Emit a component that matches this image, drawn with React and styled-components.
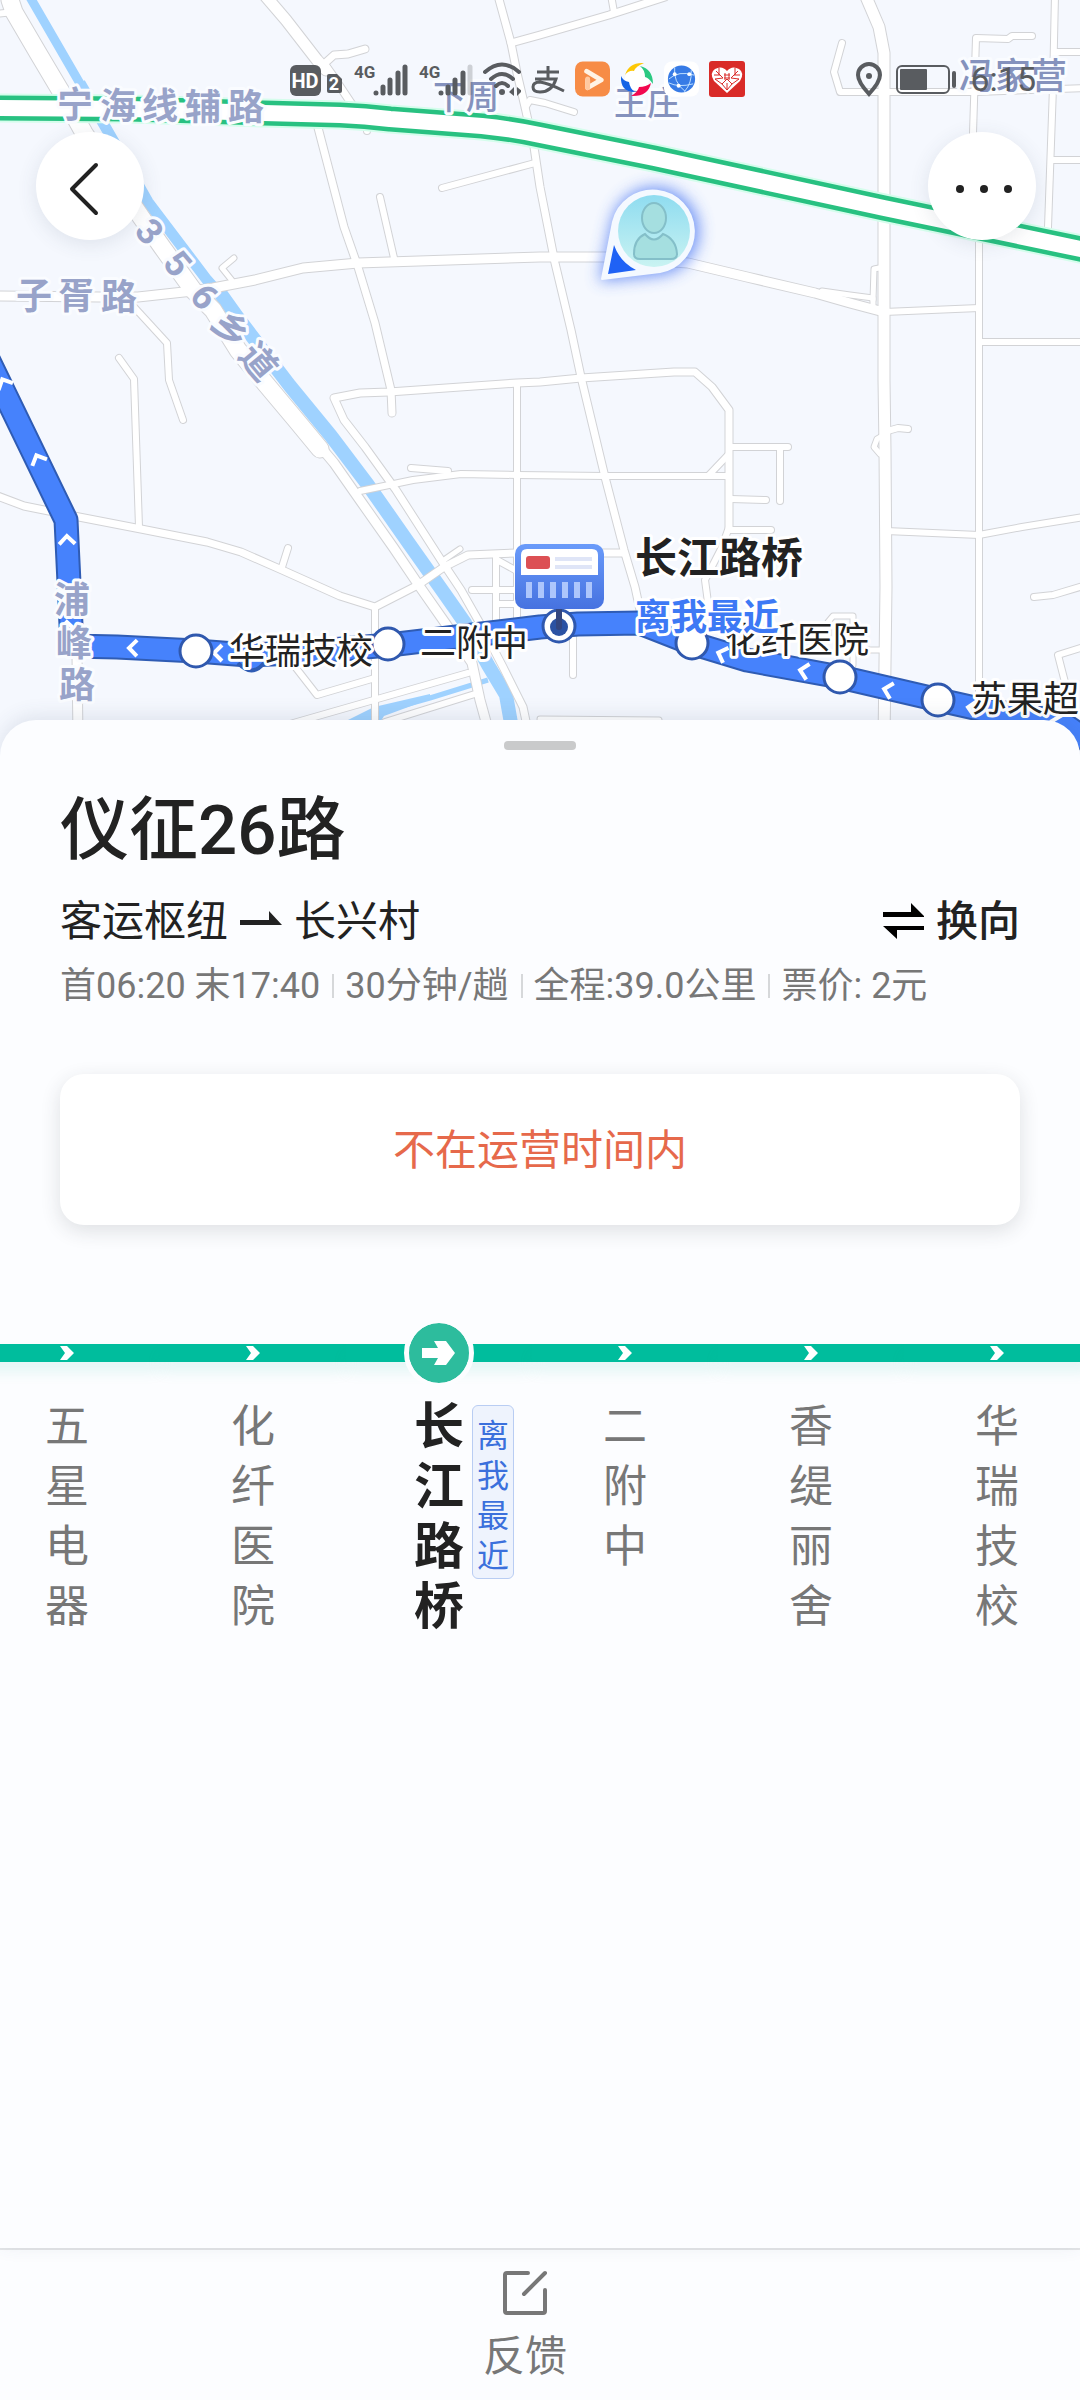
import styled, { createGlobalStyle } from "styled-components"

const roads = [
    { w: 17, d: "M10 0L14 12L38 53L60 90L84 133L141 217L162 247L193 290L213 310L238 350L265 383L296 420L320 449" },
    { w: 9, d: "M318 444L334 463L362 503L393 547L420 587L448 627L472 663L480 700L491 740" },
    { w: 6, d: "M-5 14L14 12" },
    { w: 9, d: "M-5 296L100 297L138 297L193 291L213 288L255 280L303 268L358 263L540 257L605 257L688 263L747 277L815 293L850 303L884 312" },
    { w: 6, d: "M884 312L979 308" },
    { w: 11, d: "M262 -8L286 20L317 60L326 70" },
    { w: 7, d: "M326 66L331 73L353 106" },
    { w: 7, d: "M324 64L334 55L348 54L365 49" },
    { w: 6, d: "M367 120L367 131" },
    { w: 7, d: "M316 120L344 227L358 267L375 323L391 390L392 413" },
    { w: 6, d: "M380 197L394 258" },
    { w: 6, d: "M442 188L535 163" },
    { w: 7, d: "M497 -8L511 43L517 73L525 107L534 147L540 187L555 263L571 330L581 377L605 477L624 550L635 587L640 610" },
    { w: 7, d: "M511 43L540 35L609 15L665 -3" },
    { w: 6, d: "M611 -5L614 12" },
    { w: 6, d: "M525 108L530 100L545 103L574 112" },
    { w: 11, d: "M864 -8L879 27L884 53L884 380L885 450L886 587L884 740" },
    { w: 6, d: "M842 43L834 72L840 92L884 92L976 92L1090 88" },
    { w: 6, d: "M1032 36L1012 36L1008 39L976 38L973 133L979 240L979 683L979 700" },
    { w: 6, d: "M1055 -5L1053 87L1048 227L1048 240" },
    { w: 6, d: "M1055 52L1090 52" },
    { w: 6, d: "M1051 160L1090 160" },
    { w: 6, d: "M979 342L1090 342" },
    { w: 5, d: "M884 267L874 269L873 300" },
    { w: 5, d: "M822 291L850 295L873 298L873 306" },
    { w: 6, d: "M119 358L134 379L139 527" },
    { w: 6, d: "M134 307L167 343L169 380L183 420" },
    { w: 7, d: "M-5 495L24 506L79 517L141 529L207 542L241 552L282 570L340 596L375 607L418 585L444 567L468 555L517 553L624 553" },
    { w: 6, d: "M288 548L282 567" },
    { w: 7, d: "M729 527L729 410L712 387L695 372L674 372L581 378L540 382L517 383L389 392L360 393L334 398L344 420L365 447L396 490L441 560L461 590L482 627L503 667L523 707L530 740" },
    { w: 6, d: "M729 527L722 547L705 580L709 610" },
    { w: 6, d: "M360 491L413 480L461 474L517 475L605 476L729 476" },
    { w: 6, d: "M411 468L448 471" },
    { w: 6, d: "M517 383L517 620" },
    { w: 6, d: "M496 555L496 620M472 590L517 590M496 604L517 604M497 560L517 571" },
    { w: 6, d: "M375 607L375 740" },
    { w: 6, d: "M296 668L317 695L375 678" },
    { w: 6, d: "M290 724L468 673" },
    { w: 6, d: "M385 722L478 693" },
    { w: 5, d: "M444 560L460 549" },
    { w: 5, d: "M234 283L222 268L234 258" },
    { w: 9, d: "M77 655L78 740" },
    { w: 6, d: "M729 447L788 447M780 447L780 501M731 499L766 500M729 530L771 530M709 475L728 455" },
    { w: 6, d: "M573 633L573 675" },
    { w: 6, d: "M884 432L898 428L908 429" },
    { w: 5, d: "M884 435L877 439L874 447L880 454" },
    { w: 6, d: "M886 531L979 535L1022 527L1090 516" },
    { w: 6, d: "M1034 597L1053 595L1090 584" },
    { w: 6, d: "M1090 645L1058 655L1067 690" },
    { w: 5, d: "M828 640L828 622L833 616L853 616L853 665" },
    { w: 5, d: "M866 650L884 650" },
    { w: 5, d: "M540 719L659 720" },
]

const busLine = "M-30 322L66 520L72 646L117 647L196 651L248 655L296 653L389 645L540 627L578 624L640 623L691 643L747 660L840 677L939 700L988 711L1030 716L1062 723L1110 756"
const highway = "M-10 108L130 109L264 113L340 115Q365 116 390 119L482 126Q512 129 540 135L654 158L884 208L1095 252"
const stops = [[196, 651], [388, 644], [692, 643], [840, 677], [938, 700]]
const chevrons = [[4, 383, 64], [38, 459, 66], [67, 540, 88], [133, 648, 1], [218, 653, 0], [67, 626, 88], [722, 654, 20], [804, 671, 12], [888, 690, 14], [972, 708, 10], [1056, 722, 14]]

const roadNames = [
    { text: "宁海线辅路", x: "57 100 142 185 228", y: "118 119 119 120 120" },
    { text: "子胥路", x: "16 58 101", y: "309 309 310" },
    { text: "浦峰路", x: "54 56 59", y: "613 656 698" },
]
const slopedName = [["3", 149, 232], ["5", 177, 264], ["6", 204, 297], ["乡", 230, 330], ["道", 258, 362]]

const stations = [
    { name: "五星电器" },
    { name: "化纤医院" },
    { name: "长江路桥", current: true, tag: "离我最近" },
    { name: "二附中" },
    { name: "香缇丽舍" },
    { name: "华瑞技校" },
]

function CityMap() {
    return (
        <MapSvg viewBox="0 0 1080 760" preserveAspectRatio="xMidYMin slice" aria-hidden="true">
            <defs>
                <linearGradient id="face" x1="0" y1="0" x2="0" y2="1">
                    <stop offset="0" stopColor="#8fdcf0" />
                    <stop offset="1" stopColor="#c9f3f2" />
                </linearGradient>
                <linearGradient id="board" x1="0" y1="0" x2="0" y2="1">
                    <stop offset="0" stopColor="#6a9bfa" />
                    <stop offset="1" stopColor="#4672e0" />
                </linearGradient>
                <filter id="glow" x="-50%" y="-50%" width="200%" height="200%">
                    <feGaussianBlur stdDeviation="8" />
                </filter>
            </defs>
            <rect width="1080" height="760" fill="#f5f8fe" />

            {/* river */}
            <g fill="none" stroke="#9fd2ff" strokeLinejoin="round">
                <path strokeWidth="9" d="M27 -8L82 87L100 120" />
                <path strokeWidth="11" d="M80 83L114 142L148 202L207 280L225 300" />
                <path strokeWidth="14" d="M218 290L238 318L290 386L331 436L368 485L410 545L444 593L465 623L488 665L506 695L514 740" />
                <path strokeWidth="5" d="M488 680L430 698L380 712" />
            </g>
            <path fill="#9fd2ff" d="M340 724L374 707L430 694L430 699L384 716L378 726Z" />

            {/* roads */}
            <g fill="none" strokeLinejoin="round" strokeLinecap="round">
                {roads.map((road, i) => <path key={i} d={road.d} stroke="#d2d3d6" strokeWidth={road.w + 2} />)}
                {roads.map((road, i) => <path key={i} d={road.d} stroke="#ffffff" strokeWidth={road.w} />)}
            </g>
            <g fill="none" strokeLinejoin="round">
                <path d={highway} stroke="#d5fdec" strokeWidth="29" />
                <path d={highway} stroke="#28c181" strokeWidth="25" />
                <path d={highway} stroke="#ffffff" strokeWidth="16" />
            </g>

            {/* bus route */}
            <g fill="none" strokeLinejoin="round">
                <path d={busLine} stroke="#2f5cb4" strokeWidth="25" />
                <path d={busLine} stroke="#4682fc" strokeWidth="21" />
                {chevrons.map(([x, y, r]) => (
                    <path key={x + "-" + y} transform={`translate(${x} ${y}) rotate(${r})`} d="M4 -8L-4 0L4 8" stroke="#fff" strokeWidth="4" strokeLinejoin="miter" />
                ))}
                <path d="M238 663Q252 678 264 663" stroke="#2f5cb4" strokeWidth="4" fill="#4682fc" />
                {stops.map(([x, y]) => <circle key={x} cx={x} cy={y} r="16" fill="#fff" stroke="#2f58ae" strokeWidth="3" />)}
            </g>

            <g fill="#98a3c9" fontSize="36" fontWeight="700" stroke="#fafcff" strokeWidth="6" strokeLinejoin="round" paintOrder="stroke">
                {roadNames.map((road) => <text key={road.text} x={road.x} y={road.y}>{road.text}</text>)}
                {slopedName.map(([char, x, y]) => (
                    <text key={char} transform={`translate(${x} ${y}) rotate(50)`} y="12" textAnchor="middle">{char}</text>
                ))}
                <g fill="#8592bd" fontWeight="500">
                    <text x="433" y="109" fontSize="33">下周</text>
                    <text x="614" y="115" fontSize="33">王庄</text>
                    <text x="959" y="89">冯家营</text>
                </g>
            </g>
            <g fill="#222" fontSize="36" stroke="#fff" strokeWidth="6" strokeLinejoin="round" paintOrder="stroke">
                <text x="229" y="664">华瑞技校</text>
                <text x="420" y="656">二附中</text>
                <text x="725" y="653">化纤医院</text>
                <text x="971" y="712">苏果超</text>
                <text x="635" y="573" fontSize="42" fontWeight="700">长江路桥</text>
                <text x="635" y="630" fontWeight="700" fill="#3d79f5">离我最近</text>
            </g>

            {/* stop board */}
            <circle cx="559" cy="626" r="16" fill="#fff" stroke="#2f58ae" strokeWidth="3" />
            <circle cx="559" cy="627" r="9" fill="#2b52a3" />
            <path d="M559 606V627" stroke="#33467f" strokeWidth="6" strokeLinecap="round" />
            <rect x="515" y="544" width="89" height="65" rx="10" fill="url(#board)" />
            <path d="M521 575V555Q521 549 527 549H592Q598 549 598 555V575Z" fill="#fff" />
            <rect x="526" y="556" width="24" height="13" rx="3" fill="#dc5054" />
            <path d="M555 559H592M555 567H592" stroke="#dfe5f7" strokeWidth="4" />
            <path d="M529 582V598M541 582V598M553 582V598M565 582V598M577 582V598M589 582V598" stroke="#adc6fc" strokeWidth="6" />

            {/* my position */}
            <path d="M602 279L614 222A42 42 0 1 1 660 273Z" fill="#3e6df2" stroke="#3e6df2" strokeWidth="4" opacity=".75" filter="url(#glow)" />
            <path d="M602 279L613 222A41 41 0 1 1 660 272Z" fill="#f4f9ff" stroke="#f4f9ff" strokeWidth="2" strokeLinejoin="round" />
            <path d="M614 245L608 274L636 270Q620 262 614 245Z" fill="#1f62f5" />
            <circle cx="654" cy="231" r="36" fill="url(#face)" />
            <g fill="#a5dfe0" stroke="#84bfc9" strokeWidth="2">
                <ellipse cx="654" cy="218" rx="12" ry="15" />
                <path d="M645 234Q634 239 634 254Q634 259 640 259H671Q677 259 677 254Q676 239 663 234Q654 245 645 234Z" />
            </g>
        </MapSvg>
    )
}

function Signal({ weak }) {
    return (
        <svg width={weak ? 54 : 55} height="36" viewBox={weak ? "0 0 54 36" : "0 0 55 36"}>
            <text x="0" y="17" fontSize="17" fontWeight="700">4G</text>
            <g stroke="currentColor" strokeWidth="5" strokeLinecap="round">
                <path d="M22 32V32M29 32V26M36 32V19M44 32V12" />
                <path d="M51 32V6" opacity={weak ? .25 : 1} />
            </g>
        </svg>
    )
}

function StatusIcons() {
    return (
        <StatusGroup>
            <svg width="54" height="36" viewBox="0 0 54 36">
                <rect y="4" width="31" height="31" rx="6" />
                <text x="15" y="27" fontSize="20" fontWeight="700" fill="#fff" textAnchor="middle">HD</text>
                <path d="M39 13H47L52 18V30Q52 32 50 32H39Q37 32 37 30V15Q37 13 39 13Z" />
                <text x="44" y="29" fontSize="18" fontWeight="700" fill="#fff" textAnchor="middle">2</text>
            </svg>
            <Signal />
            <Signal weak />
            <svg width="38" height="36" viewBox="0 0 38 36" fill="none" stroke="currentColor" strokeWidth="4" strokeLinecap="round">
                <path d="M2 11Q19 -4 36 11M8 18Q19 8 30 18M13 25Q19 19 25 25" />
                <circle cx="19" cy="31" r="3" fill="currentColor" stroke="none" />
                <path d="M31 26V35L26 31ZM34 26V35L39 30Z" fill="currentColor" stroke="none" />
            </svg>
            <svg width="34" height="36" viewBox="0 0 34 36" fill="none" stroke="currentColor" strokeWidth="3">
                <path d="M6 11H28M17 5V18M4 18H25Q21 31 9 31Q2 31 2 26Q2 21 9 21Q17 22 33 30" />
            </svg>
            <svg width="35" height="36" viewBox="0 0 36 36" fill="none">
                <rect width="36" height="36" rx="8" fill="#f78c46" />
                <path d="M12 10L27 19L13 27V19" stroke="#fff3e4" strokeWidth="5" strokeLinejoin="round" strokeLinecap="round" />
                <path d="M13 27V18" stroke="#ffc9a0" strokeWidth="5" strokeLinecap="round" />
            </svg>
            <svg width="34" height="36" viewBox="0 0 34 36">
                <circle cx="17" cy="18" r="12" fill="#fff" />
                <path d="M5 14Q9 1 24 2Q16 5 14 10Q9 9 5 14Z" fill="#fdc806" />
                <path d="M20 5Q33 8 33 23Q29 17 25 16Q25 9 20 5Z" fill="#2bc982" />
                <path d="M31 22Q28 36 11 35Q18 31 19 26Q26 26 31 22Z" fill="#f2084f" />
                <path d="M1 15Q3 20 9 21Q10 28 15 31Q0 31 1 15Z" fill="#1463e6" />
            </svg>
            <svg width="35" height="36" viewBox="0 0 36 36">
                <rect width="36" height="36" rx="8" fill="#fff" />
                <circle cx="18" cy="18" r="14" fill="#377be6" />
                <path d="M5 18Q15 9 31 14M11 6Q9 21 22 31M28 9Q29 22 21 31M5 22Q15 27 30 23" fill="none" stroke="#bfe0ff" strokeWidth="1" />
                <g fill="#fff">
                    <circle cx="11" cy="13" r="2" /><circle cx="26" cy="13" r="2" /><circle cx="15" cy="25" r="2" />
                </g>
            </svg>
            <svg width="36" height="36" viewBox="0 0 36 36">
                <rect width="36" height="36" rx="3" fill="#d92b28" />
                <path d="M18 32L5 20Q0 12 6 8Q13 4 18 10Q23 4 30 8Q36 12 31 20Z" fill="#fff" />
                <path d="M7 10L14 17L6 18L13 23L18 18L23 23L30 18L22 17L29 10M10 7V14M26 7V14M15 14H21M15 17H21M16 12V19M20 12V19M13 23L18 29L23 23M18 22V29M5 14H11M25 14H31" fill="none" stroke="#d92b28" strokeWidth="1" />
            </svg>
        </StatusGroup>
    )
}

export default function App() {
    return (
        <Page>
            <GlobalStyle />
            <MapArea>
                <CityMap />
                <Overlay>
                    <StatusBar>
                        <StatusIcons />
                        <Clock>
                            <svg width="26" height="36" viewBox="0 0 26 36" fill="none">
                                <path d="M13 33Q2 21 2 14A11 11 0 0 1 24 14Q24 21 13 33Z" stroke="currentColor" strokeWidth="4" />
                                <circle cx="13" cy="15" r="3" fill="currentColor" />
                            </svg>
                            <svg width="60" height="36" viewBox="0 0 60 36">
                                <rect x="1" y="5" width="52" height="27" rx="5" fill="none" stroke="currentColor" strokeWidth="2" />
                                <rect x="4" y="8" width="27" height="21" rx="1" />
                                <rect x="56" y="10" width="4" height="17" rx="2" />
                            </svg>
                            <time>6:15</time>
                        </Clock>
                    </StatusBar>
                    <NavBar>
                        <RoundButton type="button" aria-label="返回">
                            <svg width="108" height="108" viewBox="0 0 108 108" fill="none" stroke="#222" strokeWidth="4" strokeLinecap="round" strokeLinejoin="round">
                                <path d="M60 33L36 57L60 81" />
                            </svg>
                        </RoundButton>
                        <RoundButton type="button" aria-label="更多">
                            <svg width="108" height="108" viewBox="0 0 108 108" fill="#222">
                                <circle cx="32" cy="57" r="4" /><circle cx="56" cy="57" r="4" /><circle cx="80" cy="57" r="4" />
                            </svg>
                        </RoundButton>
                    </NavBar>
                </Overlay>
            </MapArea>

            <Sheet>
                <Handle />
                <RouteInfo>
                    <Title>仪征26路</Title>
                    <Direction>
                        <span>客运枢纽</span>
                        <svg width="42" height="22" viewBox="0 0 42 22" aria-hidden="true">
                            <path d="M0 9H29V0L42 14H0Z" fill="#222" />
                        </svg>
                        <span>长兴村</span>
                        <SwapButton type="button">
                            <svg width="41" height="38" viewBox="0 0 41 38" aria-hidden="true">
                                <path d="M0 9H28V0L41 13V14H0ZM0 23H41V27H14V36Z" fill="#000" />
                            </svg>
                            换向
                        </SwapButton>
                    </Direction>
                    <Facts>
                        <li>首06:20 末17:40</li>
                        <li>30分钟/趟</li>
                        <li>全程:39.0公里</li>
                        <li>票价: 2元</li>
                    </Facts>
                    <Notice>不在运营时间内</Notice>
                </RouteInfo>
                <StationList>
                    {stations.map((station) => (
                        <Station key={station.name}>
                            <Track>
                                {station.current ? (
                                    <CurrentDot>
                                        <svg width="36" height="28" viewBox="0 0 36 28"><path d="M1 9H17L13 2H25L34 14L25 26H13L17 19H1Z" fill="#fff" /></svg>
                                    </CurrentDot>
                                ) : (
                                    <svg width="16" height="16" viewBox="0 0 16 16"><path d="M1 1H8L15 8L8 15H1L6 8Z" fill="#fff" /></svg>
                                )}
                            </Track>
                            <StationName $current={station.current}>
                                {station.name}
                                {station.tag && <Tag>{station.tag}</Tag>}
                            </StationName>
                        </Station>
                    ))}
                </StationList>
            </Sheet>

            <Footer>
                <FeedbackButton type="button">
                    <svg width="46" height="46" viewBox="0 0 46 46" fill="none" stroke="#777" strokeWidth="4" strokeLinecap="round" strokeLinejoin="round" aria-hidden="true">
                        <path d="M26 3H5Q3 3 3 5V41Q3 43 5 43H41Q43 43 43 41V20M43 3L22 24" />
                    </svg>
                    反馈
                </FeedbackButton>
            </Footer>
        </Page>
    )
}

//Styled Components//
const GlobalStyle = createGlobalStyle`
    * {
        box-sizing: border-box;
        margin: 0;
        padding: 0;
    }

    body {
        background-color: #fcfdff;
        font-family: Roboto, "Noto Sans CJK SC", sans-serif;
        color: #222;
    }

    button {
        font-family: inherit;
        color: inherit;
        border: none;
        background: none;
        cursor: pointer;
    }

    svg {
        display: block;
        flex: none;
    }
`
const Page = styled.div`
    min-height: 100vh;
    display: flex;
    flex-direction: column;
    overflow-x: hidden;
`
const MapArea = styled.header`
    position: relative;
    height: 760px;
    overflow: hidden;
`
const MapSvg = styled.svg`
    width: 100%;
    height: 100%;
`
const Overlay = styled.div`
    position: absolute;
    inset: 0;
    padding-top: 61px;
`
const StatusBar = styled.div`
    height: 36px;
    padding: 0 44px 0 290px;
    display: flex;
    justify-content: space-between;
    align-items: center;
    color: #595c60;

    svg {
        fill: currentColor;
    }

    svg[fill="none"] {
        fill: none;
    }
`
const StatusGroup = styled.div`
    display: flex;
    gap: 10px;
`
const Clock = styled(StatusGroup)`
    gap: 14px;
    align-items: center;
    font-size: 34px;
    line-height: 36px;
`
const NavBar = styled.nav`
    margin-top: 35px;
    padding: 0 44px 0 36px;
    display: flex;
    justify-content: space-between;
`
const RoundButton = styled.button`
    width: 108px;
    height: 108px;
    border-radius: 50%;
    background-color: white;
    box-shadow: 0 4px 20px rgba(60, 70, 100, 0.12);
`
const Sheet = styled.main`
    position: relative;
    flex: 1;
    margin-top: -40px;
    padding-top: 21px;
    border-radius: 36px 36px 0 0;
    background-color: #fcfdff;
    box-shadow: 0 -4px 20px rgba(60, 70, 110, 0.12);
`
const Handle = styled.div`
    width: 72px;
    height: 9px;
    margin: 0 auto;
    border-radius: 4px;
    background-color: #c9cacb;
`
const RouteInfo = styled.section`
    padding: 41px 60px 0;
`
const Title = styled.h1`
    font-size: 69px;
    line-height: 80px;
    font-weight: 500;
`
const Direction = styled.div`
    margin-top: 26px;
    display: flex;
    align-items: center;
    gap: 12px;
    font-size: 42px;
    line-height: 50px;
`
const SwapButton = styled.button`
    margin-left: auto;
    display: flex;
    align-items: center;
    gap: 12px;
    font-size: 42px;
    line-height: 50px;
    font-weight: 500;
`
const Facts = styled.ul`
    margin-top: 19px;
    display: flex;
    list-style: none;
    font-size: 36px;
    line-height: 40px;
    color: #777;

    li {
        display: flex;
        align-items: center;
    }

    li + li::before {
        content: "";
        width: 2px;
        height: 24px;
        margin: 0 11px 0 12px;
        background-color: #d6d8da;
    }
`
const Notice = styled.p`
    margin-top: 68px;
    padding: 52px 0 49px;
    border-radius: 24px;
    background-color: white;
    box-shadow: 0 6px 20px rgba(40, 50, 60, 0.14);
    text-align: center;
    font-size: 42px;
    line-height: 50px;
    color: #e6694b;
`
const StationList = styled.ol`
    margin-top: 93px;
    padding-bottom: 20px;
    display: flex;
    list-style: none;
    overflow: hidden;

    /* list is scrolled a little past its first stop */
    & > li:first-child {
        margin-left: -26px;
    }
`
const Station = styled.li`
    flex: none;
    width: 186px;
    display: flex;
    flex-direction: column;
    align-items: center;
`
const Track = styled.div`
    position: relative;
    width: 100%;
    height: 18px;
    margin: 26px 0 35px;
    display: flex;
    justify-content: center;
    align-items: center;
    background-color: #00bd9d;
    box-shadow: 0 10px 14px rgba(0, 189, 157, 0.1);
`
const CurrentDot = styled.div`
    position: absolute;
    width: 70px;
    height: 70px;
    display: flex;
    justify-content: center;
    align-items: center;
    border: 5px solid #fcfdff;
    border-radius: 50%;
    background-color: #2dbc9d;
    background-clip: padding-box;
`
const StationName = styled.div`
    position: relative;
    width: 1em;
    font-size: ${({ $current }) => $current ? "50px" : "44px"};
    font-weight: ${({ $current }) => $current ? 700 : 400};
    line-height: 60px;
    color: ${({ $current }) => $current ? "#222" : "#777"};
    word-break: break-all;
`
const Tag = styled.span`
    position: absolute;
    top: 8px;
    left: 100%;
    width: 42px;
    margin-left: 8px;
    padding: 10px 4px 2px;
    border: 1px solid #b9cdf3;
    border-radius: 6px;
    background-color: #eef3fd;
    font-size: 32px;
    line-height: 40px;
    font-weight: 400;
    color: #3b70dc;
`
const Footer = styled.footer`
    padding: 20px 30px 18px 0;
    display: flex;
    justify-content: center;
    border-top: 2px solid #e4e6e8;
    background-color: #fcfdff;
`
const FeedbackButton = styled.button`
    display: flex;
    flex-direction: column;
    align-items: center;
    gap: 16px;
    font-size: 42px;
    line-height: 50px;
    color: #777;
`
